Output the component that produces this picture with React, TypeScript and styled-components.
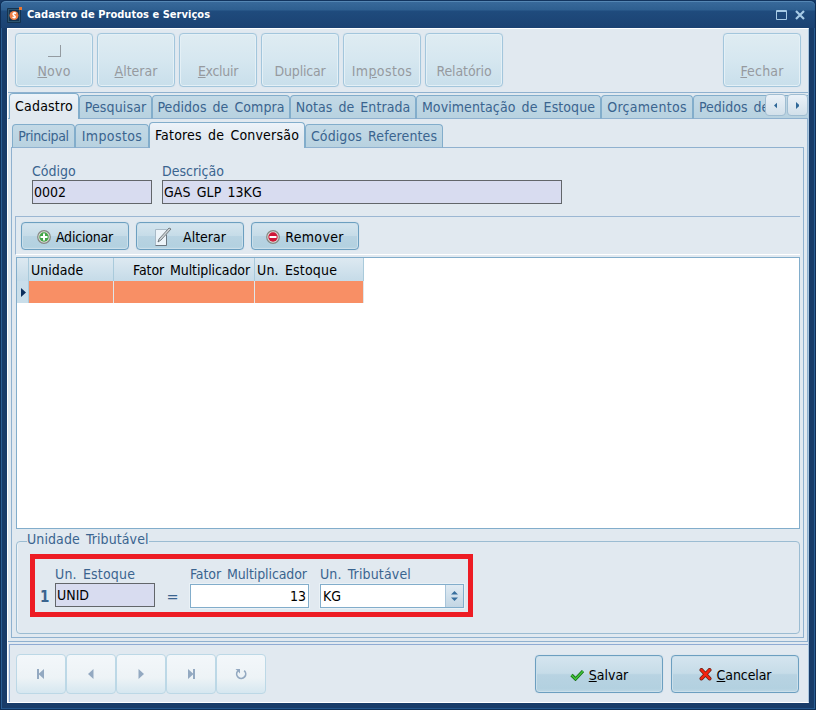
import React from "react";
import styled, { createGlobalStyle, css } from "styled-components";

const Global = createGlobalStyle`
  * { box-sizing: border-box; }
  body {
    margin: 0;
    overflow: hidden;
    background: #183c69;
    font-family: "DejaVu Sans Condensed", "DejaVu Sans", sans-serif;
    font-stretch: condensed;
    font-size: 14px;
    line-height: 18px;
    color: #3a648f;
  }
  button, input { font: inherit; }
`;

const Window = styled.main`
  width: 816px;
  height: 710px;
  display: flex;
  flex-direction: column;
  background: #183c69;
  border: 1px solid #0f2f57;
  border-top-color: #12345e;
  box-shadow: inset 1px 0 #2b5e92, inset -1px 0 #2b5e92, inset 0 -1px #24568b;
  border-radius: 5px 5px 0 0;
`;

const TitleBar = styled.header`
  height: 27px;
  flex: none;
  display: flex;
  align-items: center;
  padding: 0 9px 1px 6px;
  border-top: 1px solid #5587b4;
  border-radius: 5px 5px 0 0;
  background: linear-gradient(#38699a 0, #2e5f90 8px, #1f4b7d 9px, #1b4272 100%);
  color: #fff;
`;

const Title = styled.h1`
  margin: 0 auto 0 4px;
  font: bold 11px/16px "DejaVu Sans Condensed", "DejaVu Sans", sans-serif;
  font-stretch: condensed;
  letter-spacing: 0.04px;
`;

const Client = styled.div`
  width: 802px;
  height: 675px;
  margin-left: 6px;
  display: flex;
  flex-direction: column;
  background: #e1e9f0;
  border: 1px solid #fff;
  border-right-color: #a9c5de;
`;

const Toolbar = styled.div`
  height: 64px;
  flex: none;
  display: flex;
  align-items: flex-start;
  gap: 4px;
  padding: 4px 7px 0 7px;
  border-bottom: 1px solid #8fb1cf;
`;

const Text = styled.span<{ $ls?: number }>`
  white-space: pre;
  word-spacing: 2px;
  letter-spacing: ${(p) => p.$ls ?? 0}px;
`;

const ToolButton = styled.button<{ $end?: boolean }>`
  position: relative;
  width: 78px;
  height: 54px;
  padding: 0 0 6px;
  display: flex;
  align-items: flex-end;
  justify-content: center;
  margin-left: ${(p) => (p.$end ? "auto" : "0")};
  border: 1px solid #a3c6dc;
  border-radius: 4px;
  background: linear-gradient(#dfecf2, #d6e7f0 50%, #c9dfeb);
  box-shadow: inset 0 0 0 1px #e4f0f6, 0 0 1px #c3d6e3;
  color: #969a9f;
`;

const NewMark = styled.i`
  position: absolute;
  left: 32px;
  top: 11px;
  width: 13px;
  height: 12px;
  border: solid #949ba1;
  border-width: 0 1px 1px 0;
`;

const tabShape = css`
  border: 1px solid #82adcb;
  border-bottom: 0;
  border-radius: 4px 4px 0 0;
`;

const TabStrip = styled.div`
  position: relative;
  height: 26px;
  flex: none;
  display: flex;
  align-items: flex-end;
  padding-left: 1px;
  box-shadow: inset 0 -1px #8fb1cf;
  overflow: hidden;
`;

const Tab = styled.div<{ $w: number; $active?: boolean; $start?: boolean }>`
  ${tabShape}
  width: ${(p) => p.$w}px;
  height: ${(p) => (p.$active ? 26 : 24)}px;
  flex: none;
  display: flex;
  justify-content: ${(p) => (p.$start ? "flex-start" : "center")};
  align-items: flex-start;
  padding: ${(p) => (p.$active ? 3 : 2)}px 0 0 ${(p) => (p.$start ? 5 : 0)}px;
  background: ${(p) => (p.$active ? "linear-gradient(#edf3f9, #e1e9f0 60%)" : "linear-gradient(#c3d9e6, #b8d2e0)")};
  color: ${(p) => (p.$active ? "#000" : "#3a648f")};
  ${(p) => !p.$active && "border-bottom: 1px solid #8fb1cf;"}
`;

const Scroller = styled.div`
  position: absolute;
  right: 0;
  top: 1px;
  display: flex;
  gap: 1px;
`;

const ScrollButton = styled.button`
  width: 21px;
  height: 22px;
  padding: 0;
  display: grid;
  place-items: center;
  border: 1px solid #a0bdd2;
  border-radius: 4px;
  background: linear-gradient(#eaf1f8, #d2e0ea);
`;

const OuterPage = styled.div`
  height: 523px;
  flex: none;
  display: flex;
  flex-direction: column;
  padding: 3px 3px 3px 3px;
  border: solid #8fb1cf;
  border-width: 0 1px 1px 0;
`;

const InnerPage = styled.div`
  flex: 1;
  min-height: 0;
  display: flex;
  flex-direction: column;
  border: solid #8fb1cf;
  border-width: 0 1px 1px 1px;
  padding: 14px 3px 3px 3px;
`;

const Fields = styled.div`
  display: flex;
  gap: 10px;
  padding-left: 17px;
  height: 54px;
  flex: none;
`;

const Field = styled.label<{ $w: number; $gap?: number }>`
  width: ${(p) => p.$w}px;
  flex: none;
  display: flex;
  flex-direction: column;
  gap: ${(p) => p.$gap ?? 0}px;
`;

const ReadOnly = styled.div`
  height: 24px;
  display: flex;
  align-items: center;
  padding: 0 1px 1px;
  border: 1px solid #62666a;
  background: #d8dcf0;
  color: #000;
`;

const Editable = styled.div<{ $end?: boolean }>`
  height: 24px;
  display: flex;
  align-items: center;
  justify-content: ${(p) => (p.$end ? "flex-end" : "flex-start")};
  padding: 0 2px;
  border: 1px solid #82adcb;
  background: #fff;
  box-shadow: 0 0 0 1px #eaf1f6;
  color: #000;
`;

const Spinner = styled.i`
  width: 18px;
  height: 22px;
  margin: 0 -2px 0 auto;
  display: grid;
  place-items: center;
  border-left: 1px solid #a9c5da;
  background: linear-gradient(#e0ebf3, #c3d6e4);
`;

const ActionBar = styled.div`
  height: 39px;
  flex: none;
  display: flex;
  gap: 7px;
  padding: 5px 0 0 5px;
  border: solid #9bb7d3;
  border-width: 1px 0 0 1px;
  border-bottom: 1px solid #fff;
`;

const Button = styled.button<{ $big?: boolean }>`
  width: ${(p) => (p.$big ? 128 : 108)}px;
  height: ${(p) => (p.$big ? 38 : 28)}px;
  padding: 1px 0 0;
  display: flex;
  align-items: center;
  justify-content: center;
  gap: 5px;
  border: 1px solid #6c9fc0;
  border-radius: 4px;
  background: linear-gradient(#d5e5ef, #c6dce8 48%, #b8d3e2 52%, #b3d1e0 90%, #bcd7e5);
  box-shadow: inset 0 0 0 1px #cbdfea, 0 0 1px #a8c6da;
  color: #000;
`;

const Grid = styled.div`
  height: 272px;
  flex: none;
  margin: 2px 0 0 1px;
  border: 1px solid #82adcb;
  background: #fff;
`;

const GridRow = styled.div<{ $head?: boolean }>`
  display: grid;
  grid-template-columns: 12px 85px 141px 109px;
  width: 347px;
  height: ${(p) => (p.$head ? 23 : 22)}px;
  ${(p) => p.$head && "background: linear-gradient(#dde9f1, #c5dbe8);"}
  color: #000;
`;

const Cell = styled.div<{ $kind: "head" | "data" | "mark"; $end?: boolean }>`
  display: flex;
  align-items: center;
  justify-content: ${(p) => (p.$end ? "flex-end" : "flex-start")};
  padding: ${(p) => (p.$kind === "mark" ? "0 0 0 4px" : "1px 4px 0 2px")};
  border-right: 1px solid ${(p) => (p.$kind === "data" ? "#dfe6ea" : "#a9cadb")};
  background: ${(p) => (p.$kind === "data" ? "#f88f65" : p.$kind === "mark" ? "#c9deea" : "transparent")};
`;

const Group = styled.fieldset`
  height: 102px;
  flex: none;
  margin: 3px 0 0 1px;
  padding: 0;
  width: 784px;
  min-width: 0;
  border: 1px solid #9bbcd2;
  border-radius: 4px;
  box-shadow: inset 1px 0 #edf3f8;
`;

const Legend = styled.legend`
  margin-left: 10px;
  padding: 0;
  height: 18px;
  line-height: 15px;
`;

const Highlight = styled.div`
  width: 443px;
  height: 63px;
  margin: 4px 0 0 13px;
  display: flex;
  padding: 6px 0 0 5px;
  border: 5px solid #ed1c24;
`;

const Mark = styled.span<{ $w: number; $bold?: boolean }>`
  width: ${(p) => p.$w}px;
  flex: none;
  padding-top: 23px;
  font-size: ${(p) => (p.$bold ? 15 : 16)}px;
  text-align: ${(p) => (p.$bold ? "left" : "center")};
  font-weight: ${(p) => (p.$bold ? "bold" : "normal")};
`;

const Footer = styled.footer`
  margin: 2px 0 0 1px;
  flex: 1;
  display: flex;
  align-items: flex-start;
  padding: 10px 9px 0 6px;
  border: solid #8fabd3;
  border-width: 1px 0 0 1px;
  box-shadow: inset 0 -1px #e1e9f0;
`;

const NavButton = styled.button`
  width: 50px;
  height: 40px;
  margin-top: -1px;
  padding: 0;
  display: grid;
  place-items: center;
  border: 1px solid #bcd8e6;
  border-radius: 4px;
  background: linear-gradient(#f3f7fa, #edf3f6 60%, #d6e7f0);
`;

const Decisions = styled.div`
  margin-left: auto;
  display: flex;
  gap: 8px;
`;

const Arrow = ({ left, color, size = 9 }: { left?: boolean; color: string; size?: number }) => (
  <svg width={(size * 5) / 9} height={size} viewBox="0 0 5 9">
    <path d={left ? "M5 0v9L0 4.5z" : "M0 0v9L5 4.5z"} fill={color} />
  </svg>
);

const NavIcon = ({ kind }: { kind: string }) => (
  <svg width="14" height="14" viewBox="0 0 14 14" fill="#93a9c1">
    {kind === "first" && <path d="M3 2h2v4.500l5-4.500v10L5 7.500V12H3z" />}
    {kind === "prev" && <path d="M9.500 2v10L4 7z" />}
    {kind === "next" && <path d="M4.500 2v10L10 7z" />}
    {kind === "last" && <path d="M11 2H9v4.500L4 2v10l5-4.500V12h2z" />}
    {kind === "refresh" && (
      <>
        <path d="M3.800 4a4.500 4.500 0 1 0 6.400-.4" fill="none" stroke="#93a9c1" strokeWidth="1.700" />
        <path d="M1.500 2H6v4.500z" />
      </>
    )}
  </svg>
);

const AppIcon = () => (
  <svg width="16" height="16" viewBox="0 0 16 16">
    <rect y="1" width="14" height="15" rx="1" fill="#14324f" />
    <rect x="1.500" y="2.500" width="11" height="12" fill="none" stroke="#2d5570" />
    <circle cx="7" cy="8.500" r="4.500" fill="#ef8148" />
    <path d="M9 6.500C7 5 5 7 7 8.300s1.500 3-1.500 2" fill="none" stroke="#fff" strokeWidth="1.600" />
    <rect x="12" y="0" width="3" height="3" fill="#ed7730" />
  </svg>
);

const RoundIcon = ({ minus }: { minus?: boolean }) => (
  <svg width="14" height="14" viewBox="0 0 14 14">
    <circle cx="7" cy="7" r="6.300" fill="#dddcd7" stroke="#858985" strokeWidth="1.200" />
    <circle cx="7" cy="7" r="4.700" fill={minus ? "#cf1738" : "#42a447"} />
    <path d={minus ? "M3.500 7h7" : "M3.500 7h7M7 3.500v7"} stroke="#fff" strokeWidth="2" />
  </svg>
);

const EditIcon = () => (
  <svg width="18" height="20" viewBox="0 0 18 20">
    <path d="M1.500 2.500h11v16h-11z" fill="#edf4f9" stroke="#a9bac7" />
    <path d="M12.500 8v10.500h-11" fill="none" stroke="#6c7780" />
    <path d="M4 15l1-3L15 1l2 1L7 13z" fill="#cdd2d4" stroke="#5d666b" strokeWidth=".8" />
  </svg>
);

const navKinds = ["first", "prev", "next", "last", "refresh"];

export default function App() {
  return (
    <>
      <Global />
      <Window>
        <TitleBar>
          <AppIcon />
          <Title>Cadastro de Produtos e Serviços</Title>
          <svg width="31" height="14" viewBox="0 0 31 14">
            <path d="M1.500 2.500h10v9h-10zM1 3.500h11" fill="none" stroke="#a7cbe6" />
            <path d="M21 3l8 8M29 3l-8 8" stroke="#a7cbe6" strokeWidth="2.200" />
          </svg>
        </TitleBar>
        <Client>
          <Toolbar>
            <ToolButton><NewMark /><Text $ls={0.2}><u>N</u>ovo</Text></ToolButton>
            <ToolButton><Text><u>A</u>lterar</Text></ToolButton>
            <ToolButton><Text $ls={-0.3}><u>E</u>xcluir</Text></ToolButton>
            <ToolButton><Text $ls={-0.2}>Duplicar</Text></ToolButton>
            <ToolButton><Text $ls={0.4}>Im<u>p</u>ostos</Text></ToolButton>
            <ToolButton><Text $ls={-0.1}>Relatório</Text></ToolButton>
            <ToolButton $end><Text $ls={0.2}><u>F</u>echar</Text></ToolButton>
          </Toolbar>
          <TabStrip>
            <Tab $w={70} $active><Text $ls={0.2}>Cadastro</Text></Tab>
            <Tab $w={73}><Text $ls={0.15}>Pesquisar</Text></Tab>
            <Tab $w={138}><Text $ls={0.06}>Pedidos de Compra</Text></Tab>
            <Tab $w={126}><Text $ls={0.06}>Notas de Entrada</Text></Tab>
            <Tab $w={185}><Text $ls={0.09}>Movimentação de Estoque</Text></Tab>
            <Tab $w={92}><Text $ls={0.3}>Orçamentos</Text></Tab>
            <Tab $w={130} $start><Text>Pedidos de</Text></Tab>
            <Scroller>
              <ScrollButton><Arrow left color="#2f6797" size={7} /></ScrollButton>
              <ScrollButton><Arrow color="#2f6797" size={7} /></ScrollButton>
            </Scroller>
          </TabStrip>
          <OuterPage>
            <TabStrip>
              <Tab $w={63}><Text $ls={-0.35}>Principal</Text></Tab>
              <Tab $w={74}><Text $ls={0.4}>Impostos</Text></Tab>
              <Tab $w={156} $active><Text $ls={0.2}>Fatores de Conversão</Text></Tab>
              <Tab $w={138}><Text $ls={0.11}>Códigos Referentes</Text></Tab>
            </TabStrip>
            <InnerPage>
              <Fields>
                <Field $w={120}><Text>Código</Text><ReadOnly><Text>0002</Text></ReadOnly></Field>
                <Field $w={400}><Text>Descrição</Text><ReadOnly><Text $ls={0.08}>GAS GLP 13KG</Text></ReadOnly></Field>
              </Fields>
              <ActionBar>
                <Button><RoundIcon /><Text $ls={-0.2}>Adicionar</Text></Button>
                <Button><EditIcon /><Text> Alterar</Text></Button>
                <Button><RoundIcon minus /><Text $ls={0.3}>Remover</Text></Button>
              </ActionBar>
              <Grid>
                <GridRow $head>
                  <Cell $kind="head" />
                  <Cell $kind="head"><Text>Unidade</Text></Cell>
                  <Cell $kind="head" $end><Text $ls={-0.1}>Fator Multiplicador</Text></Cell>
                  <Cell $kind="head"><Text $ls={0.18}>Un. Estoque</Text></Cell>
                </GridRow>
                <GridRow>
                  <Cell $kind="mark"><Arrow color="#0c2f5c" /></Cell>
                  <Cell $kind="data" />
                  <Cell $kind="data" />
                  <Cell $kind="data" />
                </GridRow>
              </Grid>
              <Group>
                <Legend><Text $ls={0.1}>Unidade Tributável</Text></Legend>
                <Highlight>
                  <Mark $w={15} $bold>1</Mark>
                  <Field $w={100}><Text $ls={0.18}>Un. Estoque</Text><ReadOnly><Text>UNID</Text></ReadOnly></Field>
                  <Mark $w={35}>=</Mark>
                  <Field $w={119} $gap={1}><Text $ls={-0.1}>Fator Multiplicador</Text><Editable $end><Text>13</Text></Editable></Field>
                  <Mark $w={11} />
                  <Field $w={144} $gap={1}>
                    <Text $ls={0.15}>Un. Tributável</Text>
                    <Editable>
                      <Text>KG</Text>
                      <Spinner>
                        <svg width="7" height="10" viewBox="0 0 7 10" fill="#386f9e"><path d="M3.500 0L7 3.500H0zM0 6.500h7L3.500 10z" /></svg>
                      </Spinner>
                    </Editable>
                  </Field>
                </Highlight>
              </Group>
            </InnerPage>
          </OuterPage>
          <Footer>
            {navKinds.map((kind) => (
              <NavButton key={kind}><NavIcon kind={kind} /></NavButton>
            ))}
            <Decisions>
              <Button $big>
                <svg width="14" height="12" viewBox="0 0 14 12"><path d="M1.500 6l4 4L13 2" fill="none" stroke="#176d12" strokeWidth="3.200" /><path d="M1.500 6l4 4L13 2" fill="none" stroke="#3fc43b" strokeWidth="1.600" /></svg>
                <Text><u>S</u>alvar</Text>
              </Button>
              <Button $big>
                <svg width="13" height="13" viewBox="0 0 13 13"><path d="M2.500 2l8 8.500M10.500 2l-8 8.500" stroke="#6e2213" strokeWidth="4" strokeLinecap="round" /><path d="M2.500 2l8 8.500M10.500 2l-8 8.500" stroke="#f62410" strokeWidth="2.500" strokeLinecap="round" /></svg>
                <Text $ls={-0.1}><u>C</u>ancelar</Text>
              </Button>
            </Decisions>
          </Footer>
        </Client>
      </Window>
    </>
  );
}
